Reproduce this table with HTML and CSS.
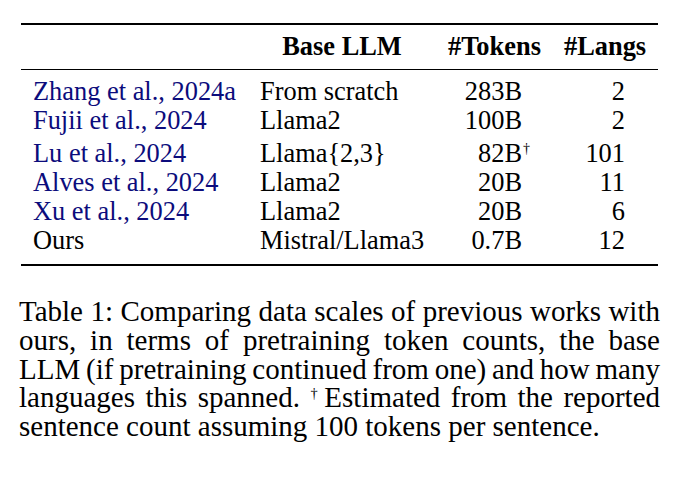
FILE: index.html
```html
<!DOCTYPE html>
<html lang="en">
<head>
<meta charset="utf-8">
<title>Table 1</title>
<link rel="stylesheet" href="styles.css">
</head>
<body>
<div class="page">
  <div class="booktab">
    <div class="row head">
      <div class="c1"></div>
      <div class="c2 hc">Base LLM</div>
      <div class="c3 hc">#Tokens</div>
      <div class="c4 hc">#Langs</div>
    </div>
    <div class="body">
      <div class="row">
        <div class="c1 cite">Zhang et al., 2024a</div>
        <div class="c2">From scratch</div>
        <div class="c3 num">283B</div>
        <div class="c4 num">2</div>
      </div>
      <div class="row">
        <div class="c1 cite">Fujii et al., 2024</div>
        <div class="c2">Llama2</div>
        <div class="c3 num">100B</div>
        <div class="c4 num">2</div>
      </div>
      <div class="row tall">
        <div class="c1 cite">Lu et al., 2024</div>
        <div class="c2">Llama{2,3}</div>
        <div class="c3 num">82B<sup class="dag">†</sup></div>
        <div class="c4 num">101</div>
      </div>
      <div class="row">
        <div class="c1 cite">Alves et al., 2024</div>
        <div class="c2">Llama2</div>
        <div class="c3 num">20B</div>
        <div class="c4 num">11</div>
      </div>
      <div class="row">
        <div class="c1 cite">Xu et al., 2024</div>
        <div class="c2">Llama2</div>
        <div class="c3 num">20B</div>
        <div class="c4 num">6</div>
      </div>
      <div class="row">
        <div class="c1">Ours</div>
        <div class="c2">Mistral/Llama3</div>
        <div class="c3 num">0.7B</div>
        <div class="c4 num">12</div>
      </div>
    </div>
  </div>
  <p class="caption">Table 1: Comparing data scales of previous works with ours, in terms of pretraining token counts, the base LLM (if pretraining continued from one) and how many languages this spanned. <sup class="cdag">†</sup>Estimated from the reported <span class="natural">sentence count assuming 100 tokens per sentence.</span></p>
</div>
</body>
</html>
```

FILE: styles.css
```css
html, body {
  margin: 0;
  padding: 0;
  background: #ffffff;
}

body {
  font-family: "Liberation Serif", "Times New Roman", serif;
  color: #000000;
  width: 680px;
  height: 481px;
  overflow: hidden;
}

.page {
  padding-top: 23px;
}

.booktab {
  margin-left: 21px;
  width: 637px;
  border-top: 2px solid #000;
  border-bottom: 2px solid #000;
  font-size: 26.4px;
  line-height: 29px;
}

.row {
  display: grid;
  grid-template-columns: 227px 188px 116px 106px;
  white-space: nowrap;
}

.row > div {
  padding: 0 12px;
}

.head {
  padding: 7px 0 8px;
  border-bottom: 1px solid #000;
  font-weight: bold;
}

.body {
  padding: 7px 0 9px;
}

.tall {
  padding-top: 4px;
}

.hc {
  text-align: center;
}

.num {
  text-align: right;
}

.c3.num {
  padding-right: 30px;
}

.c4.num {
  padding-right: 33px;
}

.cite {
  color: #0c0c7c;
}

.dag {
  font-size: 14px;
  line-height: 0;
  vertical-align: 9px;
  margin-right: -8px;
  margin-left: 1px;
}

.caption {
  margin: 31px 0 0 19px;
  width: 641px;
  font-size: 29px;
  line-height: 28.75px;
  text-align: justify;
  word-spacing: -1.5px;
}

.natural {
  word-spacing: 0;
}

.cdag {
  font-size: 14.5px;
  line-height: 0;
  vertical-align: 9px;
  margin-right: 2px;
}
```
